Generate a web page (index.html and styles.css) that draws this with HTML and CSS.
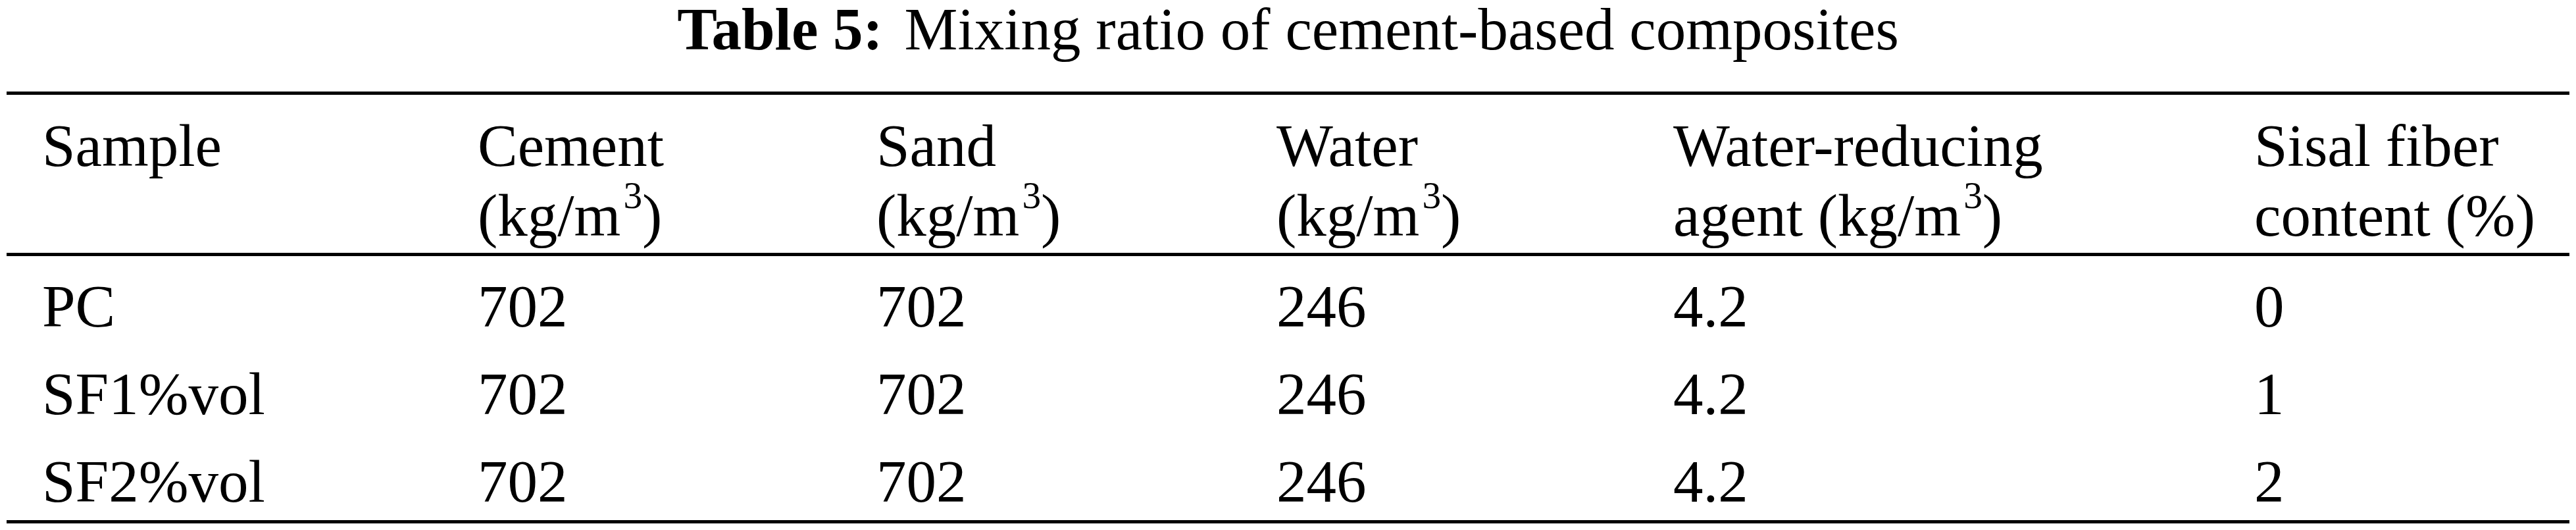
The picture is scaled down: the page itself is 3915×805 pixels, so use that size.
FILE: index.html
```html
<!DOCTYPE html>
<html lang="en">
<head>
    <meta charset="UTF-8">
    <title>Table 5: Mixing ratio of cement-based composites</title>
    <link rel="stylesheet" href="styles.css">
</head>
<body>
    <div class="figure">
        <p class="caption"><b class="caption-label">Table 5:</b> Mixing ratio of cement-based composites</p>
        <table class="mix-table">
            <colgroup>
                <col class="col-sample">
                <col class="col-cement">
                <col class="col-sand">
                <col class="col-water">
                <col class="col-agent">
                <col class="col-fiber">
            </colgroup>
            <thead>
                <tr>
                    <th>Sample</th>
                    <th>Cement<br>(kg/m<sup>3</sup>)</th>
                    <th>Sand<br>(kg/m<sup>3</sup>)</th>
                    <th>Water<br>(kg/m<sup>3</sup>)</th>
                    <th>Water-reducing<br>agent (kg/m<sup>3</sup>)</th>
                    <th>Sisal fiber<br>content (%)</th>
                </tr>
            </thead>
            <tbody>
                <tr>
                    <td>PC</td>
                    <td>702</td>
                    <td>702</td>
                    <td>246</td>
                    <td>4.2</td>
                    <td>0</td>
                </tr>
                <tr>
                    <td>SF1%vol</td>
                    <td>702</td>
                    <td>702</td>
                    <td>246</td>
                    <td>4.2</td>
                    <td>1</td>
                </tr>
                <tr>
                    <td>SF2%vol</td>
                    <td>702</td>
                    <td>702</td>
                    <td>246</td>
                    <td>4.2</td>
                    <td>2</td>
                </tr>
            </tbody>
        </table>
    </div>
</body>
</html>
```

FILE: styles.css
```css
body {
    margin: 0;
    font-family: "Liberation Serif", "Times New Roman", serif;
    font-size: 91px;
    color: #000;
    background: #fff;
}
.figure {
    width: 3895px;
    margin: 0 10px;
}
.caption {
    margin: 0 0 49px;
    line-height: 90px;
    text-align: center;
}
.caption-label {
    margin-right: 10px;
}
.mix-table {
    width: 100%;
    border-collapse: separate;
    border-spacing: 0;
    table-layout: fixed;
}
.col-sample { width: 716px; }
.col-cement { width: 606px; }
.col-sand { width: 608px; }
.col-water { width: 603px; }
.col-agent { width: 883px; }
.col-fiber { width: 479px; }
.mix-table th {
    font-weight: normal;
    text-align: left;
    vertical-align: top;
    line-height: 106px;
    padding: 25px 0 3px;
    border-top: 5px solid #000;
    border-bottom: 5px solid #000;
}
.mix-table td {
    text-align: left;
    line-height: 100px;
    padding: 33px 0 0;
}
.mix-table tbody tr:first-child td {
    padding-top: 27px;
}
.mix-table tbody tr:last-child td {
    padding-bottom: 8px;
    border-bottom: 5px solid #000;
}
.mix-table th:first-child,
.mix-table td:first-child {
    padding-left: 54px;
}
sup {
    font-size: 0.63em;
    line-height: 0;
    vertical-align: 0.73em;
    margin-left: 4px;
}
```
